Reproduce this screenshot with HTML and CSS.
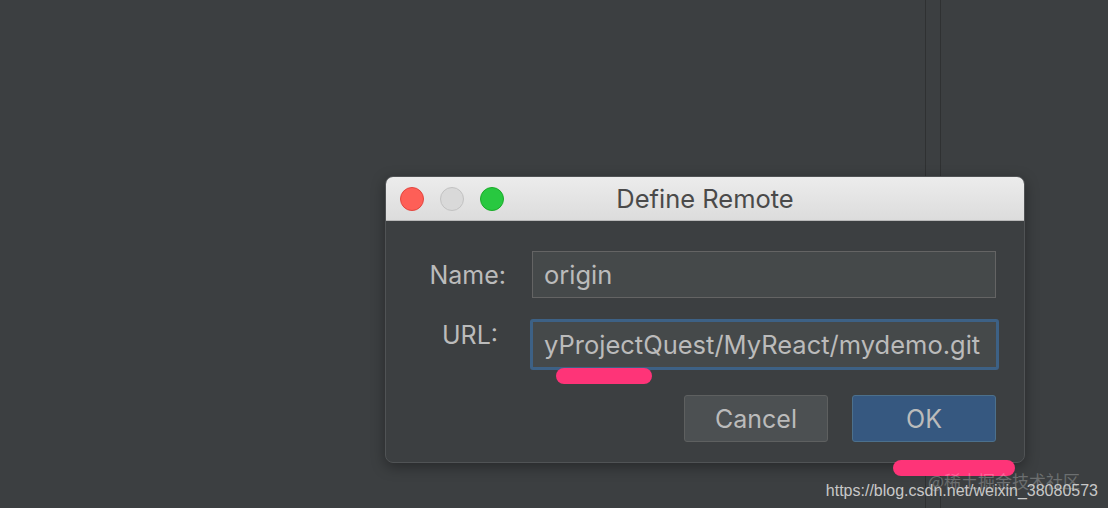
FILE: index.html
```html
<!DOCTYPE html>
<html>
<head>
<meta charset="utf-8">
<link rel="stylesheet" href="styles.css">
</head>
<body>
<div class="ide">
  <div class="main"></div>
  <div class="rail"></div>
  <div class="side"></div>
</div>

<div class="dialog">
  <div class="titlebar">
    <div class="lights">
      <span class="light red"></span>
      <span class="light gray"></span>
      <span class="light green"></span>
    </div>
    <div class="title">Define Remote</div>
  </div>
  <div class="body">
    <div class="form">
      <label class="label">Name:</label>
      <div class="field">origin</div>
      <label class="label label-url">URL:</label>
      <div class="field focused">yProjectQuest/MyReact/mydemo.git</div>
    </div>
    <div class="buttons">
      <button class="btn">Cancel</button>
      <button class="btn primary">OK</button>
    </div>
  </div>
</div>

<div class="mark mark-url"></div>
<div class="mark mark-ok"></div>

<div class="watermark">
  <span class="wm-cn">@稀土掘金技术社区</span>
  <span class="wm-url">https://blog.csdn.net/weixin_38080573</span>
</div>
</body>
</html>
```

FILE: styles.css
```css
html, body {
  margin: 0;
  padding: 0;
  width: 1108px;
  height: 508px;
  overflow: hidden;
  background: #3c3f41;
  font-family: Inter, "Open Sans", "Liberation Sans", sans-serif;
}

.ide {
  display: flex;
  height: 508px;
}
.main {
  width: 925px;
  border-right: 1px solid #2f3132;
}
.rail {
  width: 14px;
  border-right: 1px solid #2f3132;
}
.side {
  flex: 1;
}

.dialog {
  position: absolute;
  left: 385px;
  top: 176px;
  width: 640px;
  height: 287px;
  box-sizing: border-box;
  border-radius: 8px;
  background: #3c3f41;
  border: 1px solid #505355;
  box-shadow: 0 4px 14px rgba(0, 0, 0, 0.35);
  overflow: hidden;
  display: flex;
  flex-direction: column;
}

.titlebar {
  height: 43px;
  background: linear-gradient(#ececec, #dcdcdc);
  border-bottom: 1px solid #b9b9b9;
  display: flex;
  align-items: center;
  position: relative;
}
.lights {
  display: flex;
  gap: 16px;
  padding-left: 14px;
}
.light {
  width: 24px;
  height: 24px;
  border-radius: 50%;
  box-sizing: border-box;
}
.red { background: #fe5f57; border: 1px solid #e2463f; }
.gray { background: #d9d9d9; border: 1px solid #c2c2c2; }
.green { background: #28c840; border: 1px solid #1aab29; }
.title {
  position: absolute;
  left: 0;
  right: 0;
  text-align: center;
  font-size: 25.5px;
  color: #4a4a4a;
}

.body {
  flex: 1;
  padding: 30px 28px 0 0;
  display: flex;
  flex-direction: column;
}

.form {
  display: grid;
  grid-template-columns: 120px 1fr;
  column-gap: 26px;
  row-gap: 21px;
  align-items: center;
}
.label {
  text-align: right;
  color: #bbbbbb;
  font-size: 25px;
}
.label-url {
  padding-right: 8px;
  margin-top: -20px;
}
.field {
  height: 47px;
  box-sizing: border-box;
  background: #45494a;
  border: 1px solid #646464;
  color: #bbbbbb;
  font-size: 25.5px;
  padding-left: 11px;
  display: flex;
  align-items: center;
  white-space: nowrap;
  overflow: hidden;
}
.focused {
  height: 51px;
  margin-left: -2px;
  margin-right: -3px;
  border: 3px solid #3d6185;
  border-radius: 3px;
  padding-left: 11px;
}

.buttons {
  display: flex;
  justify-content: flex-end;
  gap: 24px;
  margin-top: 25px;
}
.btn {
  width: 144px;
  height: 47px;
  box-sizing: border-box;
  border-radius: 3px;
  background: #4c5052;
  border: 1px solid #5e6060;
  color: #bbbbbb;
  font-family: inherit;
  font-size: 25px;
  padding: 0;
}
.primary {
  background: #365880;
  border: 1px solid #4c708c;
}

.mark {
  position: absolute;
  background: #fe3478;
  border-radius: 8px;
}
.mark-url {
  left: 556px;
  top: 368px;
  width: 96px;
  height: 16px;
}
.mark-ok {
  left: 893px;
  top: 460px;
  width: 122px;
  height: 16px;
}

.watermark {
  position: absolute;
  left: 826px;
  top: 468px;
  width: 272px;
  height: 38px;
}
.wm-cn {
  position: absolute;
  right: 18px;
  top: 0;
  font-family: "Noto Sans CJK SC", sans-serif;
  font-size: 17px;
  color: rgba(255, 255, 255, 0.25);
  white-space: nowrap;
}
.wm-url {
  position: absolute;
  right: 0;
  top: 14px;
  font-family: "Liberation Sans", Arial, sans-serif;
  font-size: 16px;
  color: #c8c8c8;
  white-space: nowrap;
}
```
